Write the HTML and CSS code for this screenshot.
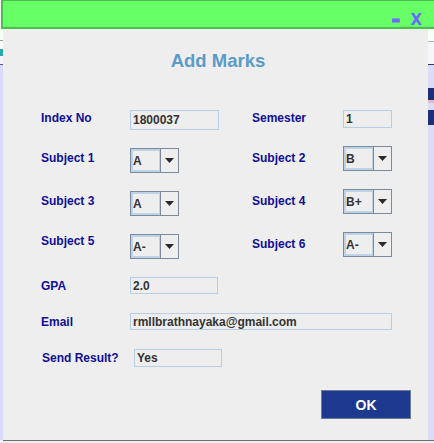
FILE: index.html
```html
<!DOCTYPE html>
<html>
<head>
<meta charset="utf-8">
<title>Add Marks</title>
<link rel="stylesheet" href="styles.css">
</head>
<body>
<div class="screen">
  <div class="titlebar">
    <span class="tb-min">-</span>
    <span class="tb-close">X</span>
  </div>
  <div class="main">
    <div class="edge-left"></div>
    <div class="dialog">
      <div class="title">Add Marks</div>
      <div class="form">
        <div class="row row-first">
          <div class="label lab">Index No</div>
          <div class="fcol"><div class="field f-index">1800037</div></div>
          <div class="label lab2">Semester</div>
          <div class="field f-sem">1</div>
        </div>

        <div class="row row-combo row-s1">
          <div class="label lab">Subject 1</div>
          <div class="fcol">
            <div class="combo combo-left"><span class="combo-val">A</span><span class="combo-btn"><svg width="9" height="5" viewBox="0 0 9 5"><polygon points="0,0 9,0 4.5,5" fill="#2a2a2a"/></svg></span></div>
          </div>
          <div class="label lab2">Subject 2</div>
          <div class="combo"><span class="combo-val">B</span><span class="combo-btn"><svg width="9" height="5" viewBox="0 0 9 5"><polygon points="0,0 9,0 4.5,5" fill="#2a2a2a"/></svg></span></div>
        </div>

        <div class="row row-combo">
          <div class="label lab">Subject 3</div>
          <div class="fcol">
            <div class="combo combo-left"><span class="combo-val">A</span><span class="combo-btn"><svg width="9" height="5" viewBox="0 0 9 5"><polygon points="0,0 9,0 4.5,5" fill="#2a2a2a"/></svg></span></div>
          </div>
          <div class="label lab2">Subject 4</div>
          <div class="combo"><span class="combo-val">B+</span><span class="combo-btn"><svg width="9" height="5" viewBox="0 0 9 5"><polygon points="0,0 9,0 4.5,5" fill="#2a2a2a"/></svg></span></div>
        </div>

        <div class="row row-combo">
          <div class="label lab lab-high">Subject 5</div>
          <div class="fcol">
            <div class="combo combo-left"><span class="combo-val">A-</span><span class="combo-btn"><svg width="9" height="5" viewBox="0 0 9 5"><polygon points="0,0 9,0 4.5,5" fill="#2a2a2a"/></svg></span></div>
          </div>
          <div class="label lab2">Subject 6</div>
          <div class="combo"><span class="combo-val">A-</span><span class="combo-btn"><svg width="9" height="5" viewBox="0 0 9 5"><polygon points="0,0 9,0 4.5,5" fill="#2a2a2a"/></svg></span></div>
        </div>

        <div class="row row-text row-gpa">
          <div class="label lab">GPA</div>
          <div class="field f-gpa">2.0</div>
        </div>

        <div class="row row-text row-email">
          <div class="label lab">Email</div>
          <div class="field f-email">rmllbrathnayaka@gmail.com</div>
        </div>

        <div class="row row-text row-send">
          <div class="label lab lab-send">Send Result?</div>
          <div class="field f-send">Yes</div>
        </div>

        <div class="actions">
          <button class="ok">OK</button>
        </div>
      </div>
    </div>
    <div class="edge-right"></div>
  </div>
  <div class="bottom"></div>
</div>
</body>
</html>
```

FILE: styles.css
```css
html, body {
  margin: 0;
  padding: 0;
  background: #f7f7f7;
}

.screen {
  width: 434px;
  height: 443px;
  overflow: hidden;
  font-family: "Liberation Sans", Arial, sans-serif;
}

.titlebar {
  box-sizing: border-box;
  height: 29px;
  margin-left: 1px;
  background: #66ff66;
  border-top: 1px solid #4dbb4d;
  border-left: 2px solid #4dbb4d;
  border-bottom: 2px solid #4dbb4d;
  display: flex;
  justify-content: flex-end;
  align-items: center;
  padding-top: 12px;
  padding-right: 12px;
  font-family: "DejaVu Sans", sans-serif;
  font-weight: bold;
  color: #6a6aff;
}

.tb-min {
  font-size: 22px;
  line-height: 18px;
  margin-right: 10px;
  -webkit-text-stroke: 1px #6a6aff;
}

.tb-close {
  font-size: 15px;
  line-height: 16px;
}

.main {
  display: flex;
  height: 411px;
}

.edge-left {
  width: 3px;
  background: linear-gradient(#f3fff3 0 11px, #9a9aa8 11px 12px, #fafafa 12px 20px, #2aa9a9 20px 27px, #f4f4ff 27px 35px, #5a5ab0 35px 36px, #dadafc 36px);
}

.edge-right {
  width: 6px;
  background: linear-gradient(#f6fff6 0 12px, #b0b0bc 12px 13px, #f7f7fb 13px 35px, #2e3a80 35px 36px, #dcdcfa 36px 59px, #1e2f7a 59px 71px, #e6b8c0 71px 74px, #dcdcfa 74px 81px, #1e2f7a 81px 96px, #dcdcfa 96px);
}

.dialog {
  flex: 1;
  background: #eeeeee;
  display: flex;
  flex-direction: column;
}

.title {
  margin-top: 21px;
  padding-left: 5px;
  text-align: center;
  font-size: 18.5px;
  line-height: 22px;
  font-weight: bold;
  color: #5b9ac9;
}

.form {
  margin-top: 38px;
  padding-left: 38px;
  display: flex;
  flex-direction: column;
}

.row {
  display: flex;
  align-items: flex-start;
}

.row-combo { margin-top: 16px; }
.row-s1 { margin-top: 16px; }
.row-gpa { margin-top: 18px; }
.row-email, .row-send { margin-top: 19px; }

.row-text { align-items: center; }

.label {
  font-size: 12px;
  line-height: 14px;
  font-weight: bold;
  color: #0e0e98;
  white-space: nowrap;
}

.lab { width: 89px; }
.lab2 { width: 91px; }
.fcol { width: 122px; }

.row-first .label { margin-top: 1px; }
.row-combo .label { margin-top: 5px; }
.row-combo .lab-high { margin-top: 2px; }
.row-text .label { margin-top: 0; }
.lab-send { width: 93px; padding-left: 1px; box-sizing: border-box; }

.field {
  box-sizing: border-box;
  border: 1px solid #b7cde3;
  padding-left: 2px;
  display: flex;
  align-items: center;
  font-size: 12px;
  font-weight: bold;
  color: #333333;
  white-space: nowrap;
}

.f-index { width: 89px; height: 20px; }
.f-sem { width: 49px; height: 18px; }
.f-gpa { width: 88px; height: 17px; }
.f-email { width: 262px; height: 17px; }
.f-send { width: 88px; height: 18px; }

.combo {
  box-sizing: border-box;
  width: 49px;
  height: 25px;
  border: 1px solid #7b8b9c;
  display: flex;
  background: #eeeeee;
}

.combo-left { margin-top: 2px; }

.combo-val {
  box-sizing: border-box;
  width: 29px;
  border: 2px solid #bfd3e7;
  border-right: none;
  box-shadow: inset -1px 0 0 #bfd3e7;
  display: flex;
  align-items: center;
  padding-top: 1px;
  font-size: 12px;
  font-weight: bold;
  color: #333333;
}

.combo-btn {
  flex: 1;
  border-left: 1px solid #7b8b9c;
  display: flex;
  align-items: center;
  justify-content: center;
}

.combo-btn svg { display: block; }

.actions {
  margin-top: 23px;
  display: flex;
  justify-content: flex-end;
  padding-right: 17px;
}

.ok {
  box-sizing: border-box;
  width: 90px;
  height: 29px;
  margin: 0;
  padding: 1px 0 0 0;
  background: #1e3a8f;
  border: 1px solid #6c7d95;
  color: #ffffff;
  font-family: "Liberation Sans", Arial, sans-serif;
  font-size: 14px;
  font-weight: bold;
}

.bottom {
  margin-left: 3px;
  height: 3px;
  box-sizing: border-box;
  border-top: 1px solid #6e6e6e;
  background: #eeeeee;
}
```
